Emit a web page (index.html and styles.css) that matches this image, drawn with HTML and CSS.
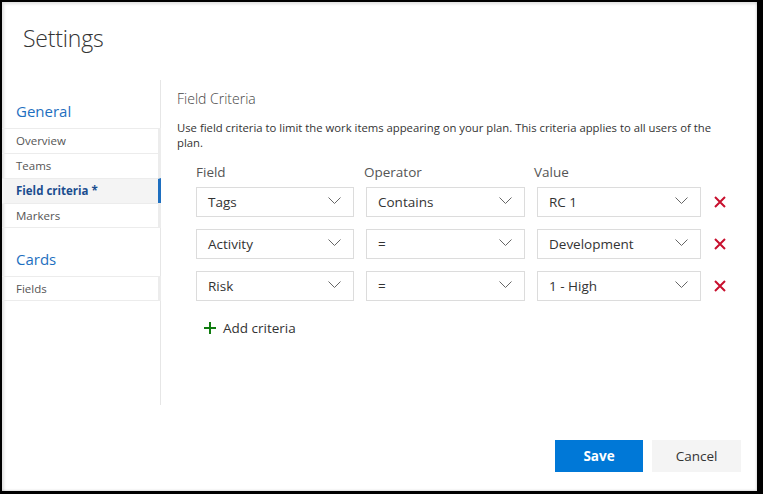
FILE: index.html
```html
<!DOCTYPE html>
<html>
<head>
<meta charset="utf-8">
<link rel="stylesheet" href="styles.css">
</head>
<body>
<div class="dialog">
  <header class="dlg-head"><h1>Settings</h1></header>
  <div class="dlg-body">
    <nav class="nav">
      <div class="nav-group">General</div>
      <ul class="nav-list">
        <li>Overview</li>
        <li>Teams</li>
        <li class="active">Field criteria *</li>
        <li>Markers</li>
      </ul>
      <div class="nav-group cards">Cards</div>
      <ul class="nav-list">
        <li>Fields</li>
      </ul>
    </nav>
    <main class="content">
      <h2>Field Criteria</h2>
      <p class="desc">Use field criteria to limit the work items appearing on your plan. This criteria applies to all users of the plan.</p>
      <div class="criteria">
        <div class="lbl">Field</div><div class="lbl">Operator</div><div class="lbl">Value</div><div></div>

        <div class="dd"><span>Tags</span><svg class="chev" width="13" height="8" viewBox="0 0 13 8"><polyline points="0.5,0.5 6.5,6.5 12.5,0.5"/></svg></div>
        <div class="dd"><span>Contains</span><svg class="chev" width="13" height="8" viewBox="0 0 13 8"><polyline points="0.5,0.5 6.5,6.5 12.5,0.5"/></svg></div>
        <div class="dd"><span>RC 1</span><svg class="chev" width="13" height="8" viewBox="0 0 13 8"><polyline points="0.5,0.5 6.5,6.5 12.5,0.5"/></svg></div>
        <svg class="del" width="12" height="12" viewBox="0 0 12 12"><path d="M1 1L11 11M11 1L1 11"/></svg>

        <div class="dd"><span>Activity</span><svg class="chev" width="13" height="8" viewBox="0 0 13 8"><polyline points="0.5,0.5 6.5,6.5 12.5,0.5"/></svg></div>
        <div class="dd"><span>=</span><svg class="chev" width="13" height="8" viewBox="0 0 13 8"><polyline points="0.5,0.5 6.5,6.5 12.5,0.5"/></svg></div>
        <div class="dd"><span>Development</span><svg class="chev" width="13" height="8" viewBox="0 0 13 8"><polyline points="0.5,0.5 6.5,6.5 12.5,0.5"/></svg></div>
        <svg class="del" width="12" height="12" viewBox="0 0 12 12"><path d="M1 1L11 11M11 1L1 11"/></svg>

        <div class="dd"><span>Risk</span><svg class="chev" width="13" height="8" viewBox="0 0 13 8"><polyline points="0.5,0.5 6.5,6.5 12.5,0.5"/></svg></div>
        <div class="dd"><span>=</span><svg class="chev" width="13" height="8" viewBox="0 0 13 8"><polyline points="0.5,0.5 6.5,6.5 12.5,0.5"/></svg></div>
        <div class="dd"><span>1 - High</span><svg class="chev" width="13" height="8" viewBox="0 0 13 8"><polyline points="0.5,0.5 6.5,6.5 12.5,0.5"/></svg></div>
        <svg class="del" width="12" height="12" viewBox="0 0 12 12"><path d="M1 1L11 11M11 1L1 11"/></svg>
      </div>
      <div class="add"><svg width="12" height="12" viewBox="0 0 12 12"><path d="M6 0V12M0 6H12"/></svg><span>Add criteria</span></div>
    </main>
  </div>
  <footer class="dlg-foot">
    <button class="btn primary">Save</button>
    <button class="btn">Cancel</button>
  </footer>
</div>
</body>
</html>
```
FILE: styles.css
```css
* { box-sizing: border-box; }
html, body { margin: 0; padding: 0; }
body {
  background: #000;
  width: 763px;
  height: 494px;
  font-family: "Open Sans", "Noto Sans", sans-serif;
  color: #333;
  overflow: hidden;
}
.dialog {
  margin: 2px 6px 3px 2px;
  height: 489px;
  background: #fff;
  display: flex;
  flex-direction: column;
  box-shadow: inset 2px 2px 3px rgba(0,0,0,0.12), inset -1px -1px 2px rgba(0,0,0,0.12);
}
.dlg-head { height: 78px; padding: 20px 0 0 21px; }
.dlg-head h1 {
  margin: 0;
  font-weight: 300;
  font-size: 23px;
  color: #333;
  letter-spacing: -0.2px;
}
.dlg-body { display: flex; height: 325px; }
.nav {
  width: 159px;
  border-right: 1px solid #e6e6e6;
  padding-top: 20px;
}
.nav-group {
  color: #1e6fc0;
  font-size: 15px;
  padding-left: 14px;
  height: 28px;
  line-height: 22px;
}
.nav-group.cards { margin-top: 20px; }
.nav-list { list-style: none; margin: 0; padding: 0; }
.nav-list li {
  height: 25px;
  line-height: 23px;
  font-size: 11.5px;
  color: #555;
  padding-left: 14px;
  border-top: 1px solid #ececec;
  border-right: 3px solid #ececec;
  margin-right: -1px;
}
.nav-list li:last-child { border-bottom: 1px solid #ececec; }
.nav-list li.active {
  background: #f4f4f4;
  color: #1a4d8f;
  font-weight: 700;
  border-right-color: #1e6fc0;
}
.content { flex: 1; padding: 9px 0 0 16px; }
.content h2 {
  margin: 0;
  font-weight: 300;
  font-size: 14px;
  color: #444;
  height: 31px;
}
.desc {
  margin: 0;
  font-size: 11.3px;
  line-height: 15px;
  color: #333;
  width: 545px;
}
.criteria {
  margin: 13px 0 0 19px;
  display: grid;
  grid-template-columns: 158px 159px 164px 26px;
  column-gap: 12px;
  row-gap: 12px;
  align-items: center;
}
.lbl { font-size: 13.5px; color: #555; margin-bottom: -6px; }
.lbl:nth-child(2) { margin-left: -2px; }
.lbl:nth-child(3) { margin-left: -3px; }
.dd {
  height: 30px;
  border: 1px solid #dcdcdc;
  display: flex;
  align-items: center;
  justify-content: space-between;
  padding: 0 12px 0 11px;
  font-size: 13.5px;
  color: #333;
}
.chev { fill: none; stroke: #666; stroke-width: 1; margin-top: -2px; }
.del { stroke: #c8102e; stroke-width: 2; margin-left: 1px; }
.add {
  margin: 18px 0 0 27px;
  display: flex;
  align-items: center;
  gap: 7px;
  font-size: 13.5px;
  color: #333;
}
.add svg { stroke: #107c10; stroke-width: 2; }
.dlg-foot {
  flex: 1;
  display: flex;
  justify-content: flex-end;
  align-items: flex-start;
  gap: 9px;
  padding: 35px 16px 0 0;
}
.btn {
  width: 89px;
  height: 32px;
  border: none;
  background: #f4f4f4;
  color: #333;
  font-family: inherit;
  font-size: 13.5px;
  padding: 0;
}
.btn.primary { width: 88px; background: #0078d7; color: #fff; font-weight: 700; }
```
